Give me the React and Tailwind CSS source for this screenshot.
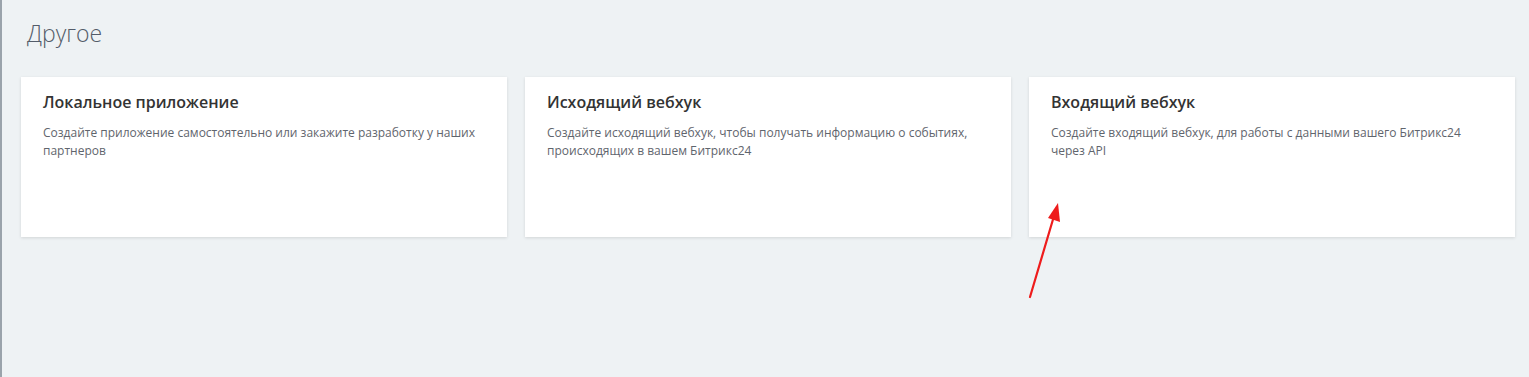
const cards = [
    {
        title: "Локальное приложение",
        text: "Создайте приложение самостоятельно или закажите разработку у наших партнеров",
    },
    {
        title: "Исходящий вебхук",
        text: "Создайте исходящий вебхук, чтобы получать информацию о событиях, происходящих в вашем Битрикс24",
    },
    {
        title: "Входящий вебхук",
        text: "Создайте входящий вебхук, для работы с данными вашего Битрикс24 через API",
    },
]

function Card({ title, text }) {
    return (
        <div className="h-[160px] bg-white px-[22px] pt-[13px] shadow-[0_1px_3px_rgba(0,0,0,0.12)]">
            <h3 className="text-[16px] font-semibold leading-[24px] text-[#333]">{title}</h3>
            <p className="mt-[10px] text-[12px] leading-[18px] text-[#5f656d]">{text}</p>
        </div>
    )
}

export default function App() {
    return (
        <div
            className="relative flex h-[377px] w-[1529px] bg-[#eef2f4]"
            style={{ fontFamily: '"Open Sans", "Noto Sans", sans-serif' }}
        >
            <div className="w-[2px] bg-[#9aa3ab]" />
            <div className="flex-1 pl-[19px] pr-[14px]">
                <h2 className="ml-[6px] mt-[18px] text-[23px] font-light leading-[30px] text-[#535c69]">Другое</h2>
                <div className="mt-[29px] grid grid-cols-3 gap-[18px]">
                    {cards.map((c) => (
                        <Card key={c.title} {...c} />
                    ))}
                </div>
            </div>
            <svg className="absolute left-[1024px] top-[198px]" width="44" height="104" viewBox="0 0 44 104">
                <line x1="6" y1="99" x2="30" y2="18" stroke="#ee1c1c" strokeWidth="2.2" strokeLinecap="round" />
                <polygon points="34,5 36,24 24,20" fill="#ee1c1c" />
            </svg>
        </div>
    )
}
